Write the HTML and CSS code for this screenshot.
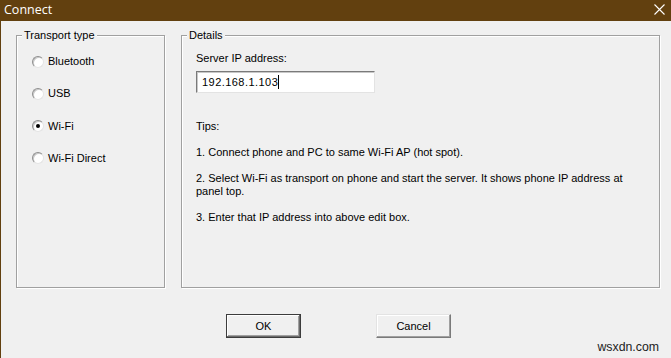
FILE: index.html
```html
<!DOCTYPE html>
<html>
<head>
<meta charset="utf-8">
<link rel="stylesheet" href="styles.css">
</head>
<body>
<div class="window">
  <div class="titlebar">
    <span class="title">Connect</span>
    <svg class="close" width="11" height="11" viewBox="0 0 11 11"><path d="M0.5 0.5 L10.5 10.5 M10.5 0.5 L0.5 10.5" stroke="#fff" stroke-width="1.1" fill="none"/></svg>
  </div>
  <div class="content">
    <div class="groups">
      <div class="group transport">
        <span class="group-title">Transport type</span>
        <div class="radios">
          <label class="radio"><span class="dot"></span>Bluetooth</label>
          <label class="radio"><span class="dot"></span>USB</label>
          <label class="radio"><span class="dot checked"></span>Wi-Fi</label>
          <label class="radio"><span class="dot"></span>Wi-Fi Direct</label>
        </div>
      </div>
      <div class="group details">
        <span class="group-title">Details</span>
        <div class="field-label">Server IP address:</div>
        <div class="input"><span class="value">192.168.1.103</span><span class="caret"></span></div>
        <div class="tips">
          <p>Tips:</p>
          <p>1. Connect phone and PC to same Wi-Fi AP (hot spot).</p>
          <p>2. Select Wi-Fi as transport on phone and start the server. It shows phone IP address at panel top.</p>
          <p>3. Enter that IP address into above edit box.</p>
        </div>
      </div>
    </div>
    <div class="buttons">
      <button class="btn default">OK</button>
      <button class="btn">Cancel</button>
    </div>
  </div>
  <div class="watermark">wsxdn.com</div>
</div>
</body>
</html>
```

FILE: styles.css
```css
* { box-sizing: border-box; }
html, body {
  margin: 0;
  padding: 0;
  width: 671px;
  height: 358px;
  overflow: hidden;
  background: #f0f0f0;
}
body {
  font-family: "Liberation Sans", Arial, sans-serif;
  font-size: 11px;
  color: #000;
}
.window {
  position: relative;
  width: 671px;
  height: 358px;
}
.titlebar {
  height: 21px;
  background: #62400f;
  display: flex;
  align-items: center;
  justify-content: space-between;
  padding: 0 6px 2px 4px;
}
.title {
  font-family: "Open Sans", "Noto Sans", sans-serif;
  font-size: 12.5px;
  color: #fff;
  line-height: 16px;
}
.close { display: block; margin-top: 0; }
.content {
  height: 337px;
  border-left: 1px solid #62400f;
  padding: 14px 0 0 15px;
}
.groups {
  display: flex;
  gap: 16px;
}
.group {
  position: relative;
  height: 253px;
  border: 1px solid #a0a0a0;
  box-shadow: 1px 1px 0 #fff, inset 1px 1px 0 #fff;
}
.transport { width: 149px; }
.details { width: 479px; padding: 16px 0 0 14px; }
.group-title {
  position: absolute;
  top: -7px;
  left: 5px;
  padding: 0 2px 0 2px;
  background: #f0f0f0;
  line-height: 13px;
}
.radios {
  display: flex;
  flex-direction: column;
  gap: 19.3px;
  padding: 19px 0 0 15px;
}
.radio {
  display: flex;
  align-items: center;
  gap: 4px;
  line-height: 13px;
  height: 13px;
}
.dot {
  position: relative;
  width: 12px;
  height: 12px;
  border-radius: 50%;
  background: #fff;
  border: 1px solid;
  border-color: #8e8e8e #e4e4e4 #e4e4e4 #8e8e8e;
  box-shadow: inset 1px 1px 0 #c9c9c9;
}
.dot.checked::after {
  content: "";
  position: absolute;
  left: 3px;
  top: 3px;
  width: 4px;
  height: 4px;
  border-radius: 50%;
  background: #000;
}
.field-label { line-height: 13px; }
.input {
  margin-top: 6px;
  width: 179px;
  height: 22px;
  background: #fff;
  border: 1px solid;
  border-color: #7a7a7a #e3e3e3 #e3e3e3 #7a7a7a;
  box-shadow: inset 1px 1px 0 #c8c8c8;
  display: flex;
  align-items: center;
  padding-left: 5px;
}
.value { letter-spacing: 0.45px; line-height: 13px; }
.caret {
  width: 1px;
  height: 14px;
  background: #000;
  margin-left: 0;
}
.tips {
  margin-top: 27px;
  width: 440px;
  line-height: 13px;
}
.tips p { margin: 0 0 13px 0; }
.buttons {
  display: flex;
  gap: 75px;
  padding: 26px 0 0 210px;
}
.btn {
  width: 75px;
  height: 24px;
  font-family: "Liberation Sans", Arial, sans-serif;
  font-size: 11px;
  color: #000;
  background: #f0f0f0;
  border: 1px solid;
  border-color: #e3e3e3 #7a7a7a #7a7a7a #e3e3e3;
  box-shadow: inset -1px -1px 0 #a0a0a0, inset 1px 1px 0 #fff;
  padding: 0;
}
.btn.default {
  border-color: #3c3c3c;
  box-shadow: inset -1px -1px 0 #6b6b6b, inset 1px 1px 0 #fff, inset -2px -2px 0 #a0a0a0;
}
.watermark {
  position: absolute;
  right: 12px;
  bottom: 3px;
  font-size: 12.3px;
  color: #222;
  line-height: 15px;
}
```
